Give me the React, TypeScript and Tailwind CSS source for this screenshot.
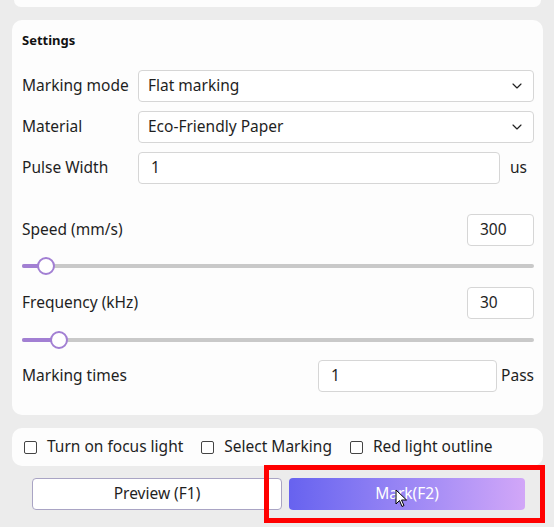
import { ChevronDown } from 'lucide-react';

const font = { fontFamily: '"Noto Sans", "Open Sans", sans-serif' };

function Select({ value }: { value: string }) {
  return (
    <div className="flex-1 h-[32px] rounded-[4px] border border-[#d6d6d6] bg-white flex items-center justify-between pl-[9px] pr-[8px]">
      <span className="text-[15.5px] text-[#1f1f1f]">{value}</span>
      <ChevronDown className="w-[16px] h-[16px] text-[#222]" strokeWidth={1.75} />
    </div>
  );
}

function Field({ value, className }: { value: string; className: string }) {
  return (
    <div className={`h-[32px] rounded-[4px] border border-[#d6d6d6] bg-white flex items-center pl-[12px] text-[15.5px] text-[#1f1f1f] ${className}`}>
      {value}
    </div>
  );
}

function Slider({ pos }: { pos: number }) {
  // pos = thumb centre, in px from the track start
  return (
    <div className="relative h-[18px] flex items-center">
      <div className="w-full h-[4px] bg-[#c9c9c9] rounded-full" />
      <div className="absolute left-0 h-[4px] bg-[#a27fd3] rounded-l-full" style={{ width: pos }} />
      <div
        className="absolute w-[18px] h-[18px] rounded-full bg-white border-2 border-[#a27fd3]"
        style={{ left: pos - 9 }}
      />
    </div>
  );
}

function Check({ label }: { label: string }) {
  return (
    <label className="flex items-center gap-[10px]">
      <span className="w-[13px] h-[13px] border border-[#444] rounded-[2px] bg-white" />
      <span className="text-[15.5px] text-[#1f1f1f]">{label}</span>
    </label>
  );
}

export default function App() {
  return (
    <div className="relative w-[554px] h-[527px] overflow-hidden bg-[#ececec] pl-[12px] pr-[11px] flex flex-col" style={font}>
      {/* previous panel, scrolled off the top */}
      <div className="h-[7px] rounded-b-[10px] bg-[#fdfdfd] mx-[2px]" />

      {/* settings panel */}
      <div className="mt-[13px] h-[395px] rounded-[10px] bg-[#fdfdfd] pl-[10px] pr-[9px] flex flex-col">
        <div className="mt-[12px] h-[16px] leading-[16px] text-[13px] font-bold text-[#111]">Settings</div>

        <div className="mt-[22px] flex items-center">
          <span className="w-[116px] text-[15.5px] text-[#1f1f1f]">Marking mode</span>
          <Select value="Flat marking" />
        </div>
        <div className="mt-[9px] flex items-center">
          <span className="w-[116px] text-[15.5px] text-[#1f1f1f]">Material</span>
          <Select value="Eco-Friendly Paper" />
        </div>
        <div className="mt-[9px] flex items-center">
          <span className="w-[116px] text-[15.5px] text-[#1f1f1f]">Pulse Width</span>
          <Field value="1" className="flex-1" />
          <span className="w-[34px] pl-[10px] text-[15.5px] text-[#1f1f1f]">us</span>
        </div>

        <div className="mt-[30px] flex items-center justify-between">
          <span className="text-[15.5px] text-[#1f1f1f]">Speed (mm/s)</span>
          <Field value="300" className="w-[67px]" />
        </div>
        <div className="mt-[11px]">
          <Slider pos={24} />
        </div>

        <div className="mt-[12px] flex items-center justify-between">
          <span className="text-[15.5px] text-[#1f1f1f]">Frequency (kHz)</span>
          <Field value="30" className="w-[67px]" />
        </div>
        <div className="mt-[12px]">
          <Slider pos={37} />
        </div>

        <div className="mt-[11px] flex items-center">
          <span className="flex-1 text-[15.5px] text-[#1f1f1f]">Marking times</span>
          <Field value="1" className="w-[179px]" />
          <span className="w-[37px] text-right text-[15.5px] text-[#1f1f1f]">Pass</span>
        </div>
      </div>

      {/* toggles */}
      <div className="mt-[13px] h-[38px] rounded-[10px] bg-[#fdfdfd] pl-[12px] flex items-center gap-[18px]">
        <Check label="Turn on focus light" />
        <Check label="Select Marking" />
        <Check label="Red light outline" />
      </div>

      {/* actions */}
      <div className="mt-[12px] ml-[20px] flex gap-[7px]">
        <button className="w-[250px] h-[32px] rounded-[4px] border border-[#a9a4c4] bg-white text-[15.5px] text-[#1f1f1f]">
          Preview (F1)
        </button>
        <button className="w-[236px] h-[32px] rounded-[4px] bg-gradient-to-r from-[#6762ef] to-[#d2a7f8] text-[15.5px] text-white">
          Mark(F2)
        </button>
      </div>

      {/* highlight frame */}
      <div className="absolute left-[264px] top-[465px] w-[281px] h-[58px] border-[5px] border-[#ff0000]" />

      {/* mouse pointer */}
      <svg className="absolute left-[395px] top-[489px]" width="13" height="20" viewBox="0 0 13 20">
        <path d="M1 1 L1 15 L4.5 11.5 L7 17.5 L9 16.5 L6.5 11 L11.5 11 Z" fill="#fff" stroke="#000" strokeWidth="1" strokeLinejoin="round" />
      </svg>
    </div>
  );
}
